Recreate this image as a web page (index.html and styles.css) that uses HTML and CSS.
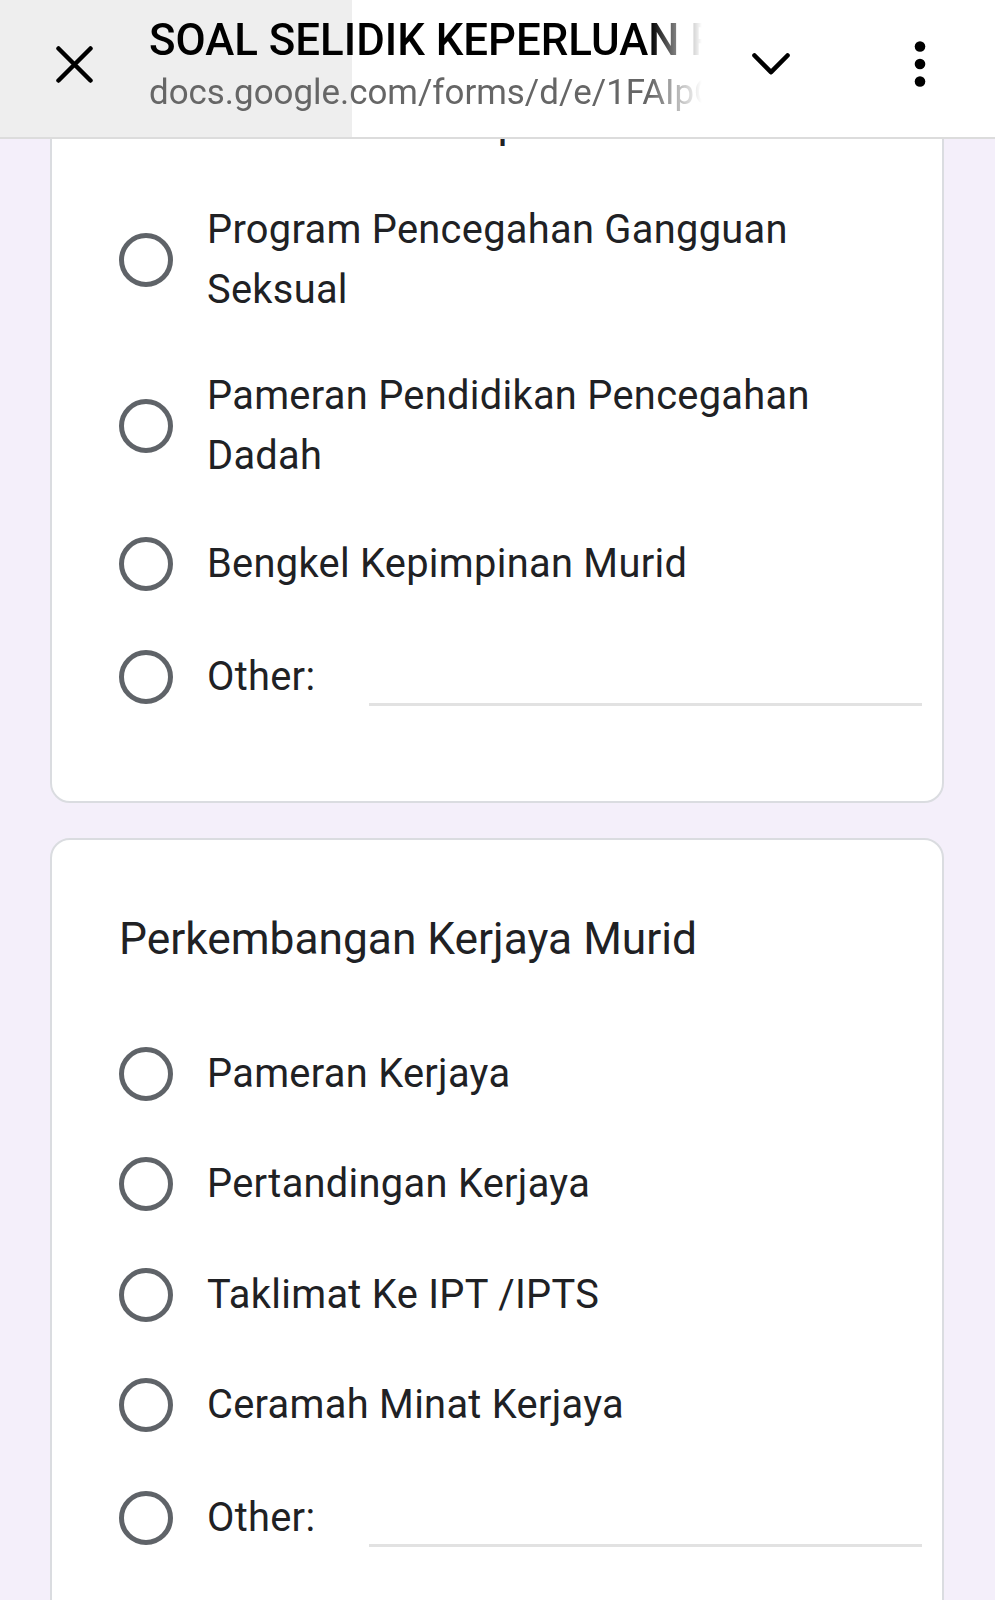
FILE: index.html
```html
<!DOCTYPE html>
<html lang="ms">
<head>
<meta charset="utf-8">
<title>SOAL SELIDIK KEPERLUAN</title>
<link rel="stylesheet" href="styles.css">
</head>
<body>
<header class="topbar">
  <div class="topbar-btn close-btn">
    <svg width="37" height="37" viewBox="0 0 37 37" aria-hidden="true">
      <path d="M2.5 2.5 L34.5 34.5 M34.5 2.5 L2.5 34.5" stroke="#000" stroke-width="4.5" stroke-linecap="round" fill="none"/>
    </svg>
  </div>
  <div class="topbar-titles">
    <div class="topbar-title">SOAL SELIDIK KEPERLUAN PROGRAM BIMBINGAN DAN KAUNSELING</div>
    <div class="topbar-url">docs.google.com/forms/d/e/1FAIpQLSf/viewform</div>
  </div>
  <div class="topbar-btn chevron-btn">
    <svg width="38" height="22" viewBox="0 0 38 22" aria-hidden="true">
      <path d="M2.5 2.5 L19 19.2 L35.5 2.5" stroke="#000" stroke-width="4.6" stroke-linecap="round" stroke-linejoin="round" fill="none"/>
    </svg>
  </div>
  <div class="topbar-btn menu-btn">
    <svg width="12" height="46" viewBox="0 0 12 46" aria-hidden="true">
      <circle cx="6" cy="5.5" r="5.3" fill="#000"/>
      <circle cx="6" cy="23" r="5.3" fill="#000"/>
      <circle cx="6" cy="40.5" r="5.3" fill="#000"/>
    </svg>
  </div>
</header>

<main class="form">
  <section class="card card-first">
    <div class="q-title">Kesihatan atau Disiplin</div>
    <div class="options">
      <div class="option">
        <div class="radio"></div>
        <div class="option-label">Program Pencegahan Gangguan Seksual</div>
      </div>
      <div class="option">
        <div class="radio"></div>
        <div class="option-label">Pameran Pendidikan Pencegahan Dadah</div>
      </div>
      <div class="option">
        <div class="radio"></div>
        <div class="option-label">Bengkel Kepimpinan Murid</div>
      </div>
      <div class="option option-other">
        <div class="radio"></div>
        <div class="option-label">Other:</div>
        <input class="other-input" type="text" aria-label="Other">
      </div>
    </div>
  </section>

  <section class="card">
    <div class="q-title">Perkembangan Kerjaya Murid</div>
    <div class="options">
      <div class="option">
        <div class="radio"></div>
        <div class="option-label">Pameran Kerjaya</div>
      </div>
      <div class="option">
        <div class="radio"></div>
        <div class="option-label">Pertandingan Kerjaya</div>
      </div>
      <div class="option">
        <div class="radio"></div>
        <div class="option-label">Taklimat Ke IPT /IPTS</div>
      </div>
      <div class="option">
        <div class="radio"></div>
        <div class="option-label">Ceramah Minat Kerjaya</div>
      </div>
      <div class="option option-other">
        <div class="radio"></div>
        <div class="option-label">Other:</div>
        <input class="other-input" type="text" aria-label="Other">
      </div>
    </div>
  </section>
</main>
</body>
</html>
```

FILE: styles.css
```css
* {
  box-sizing: border-box;
}

html,
body {
  margin: 0;
  padding: 0;
}

body {
  background: #f4effa;
  font-family: Roboto, "Noto Sans", "Liberation Sans", Arial, sans-serif;
  color: #202124;
}

/* ---------- browser custom-tab bar ---------- */
.topbar {
  position: fixed;
  top: 0;
  left: 0;
  right: 0;
  height: 139px;
  display: flex;
  align-items: flex-start;
  background: linear-gradient(90deg, #eeeeee 0, #eeeeee 352px, #ffffff 352px);
  border-bottom: 2px solid #dcdcdc;
  z-index: 10;
}

.topbar-btn {
  flex: none;
  height: 128px;
  display: flex;
  align-items: center;
  justify-content: center;
}

.close-btn {
  width: 149px;
}

.topbar-titles {
  flex: none;
  width: 556px;
  margin-right: -5px;
  padding-top: 15px;
  overflow: hidden;
  white-space: nowrap;
  -webkit-mask-image: linear-gradient(90deg, #000 501px, transparent 553px);
  mask-image: linear-gradient(90deg, #000 501px, transparent 553px);
}

.topbar-title {
  font-size: 43.8px;
  font-weight: 500;
  line-height: 50px;
  color: #000;
}

.topbar-url {
  font-size: 34.9px;
  line-height: 56px;
  color: #666666;
}

.chevron-btn {
  width: 142px;
}

.menu-btn {
  width: 153px;
  padding-left: 3px;
}

/* ---------- form ---------- */
.form {
  padding-top: 21px;
  padding-bottom: 40px;
}

.card {
  width: 894px;
  margin: 0 0 35px 50px;
  background: #ffffff;
  border: 2px solid #dadce0;
  border-radius: 20px;
  padding: 66px 20px 66px 67px;
}

.q-title {
  font-size: 44.3px;
  line-height: 66px;
  color: #202124;
  margin-bottom: 47px;
}

.card-first .q-title {
  margin-bottom: 22px;
}

.option {
  display: flex;
  align-items: center;
  min-height: 110.5px;
  padding: 23px 0;
}

.option-other {
  min-height: 115px;
}

.radio {
  flex: none;
  width: 54px;
  height: 54px;
  border: 5px solid #5f6368;
  border-radius: 50%;
  margin-right: 34px;
}

.option-label {
  max-width: 660px;
  font-size: 39.8px;
  line-height: 60px;
  letter-spacing: 0.3px;
  color: #202124;
}

.other-input {
  flex: 1;
  min-width: 0;
  height: 57.5px;
  margin-left: 54px;
  padding: 0;
  border: 0;
  border-bottom: 3px solid #e2e2e2;
  background: transparent;
  font: inherit;
  outline: none;
}
```
